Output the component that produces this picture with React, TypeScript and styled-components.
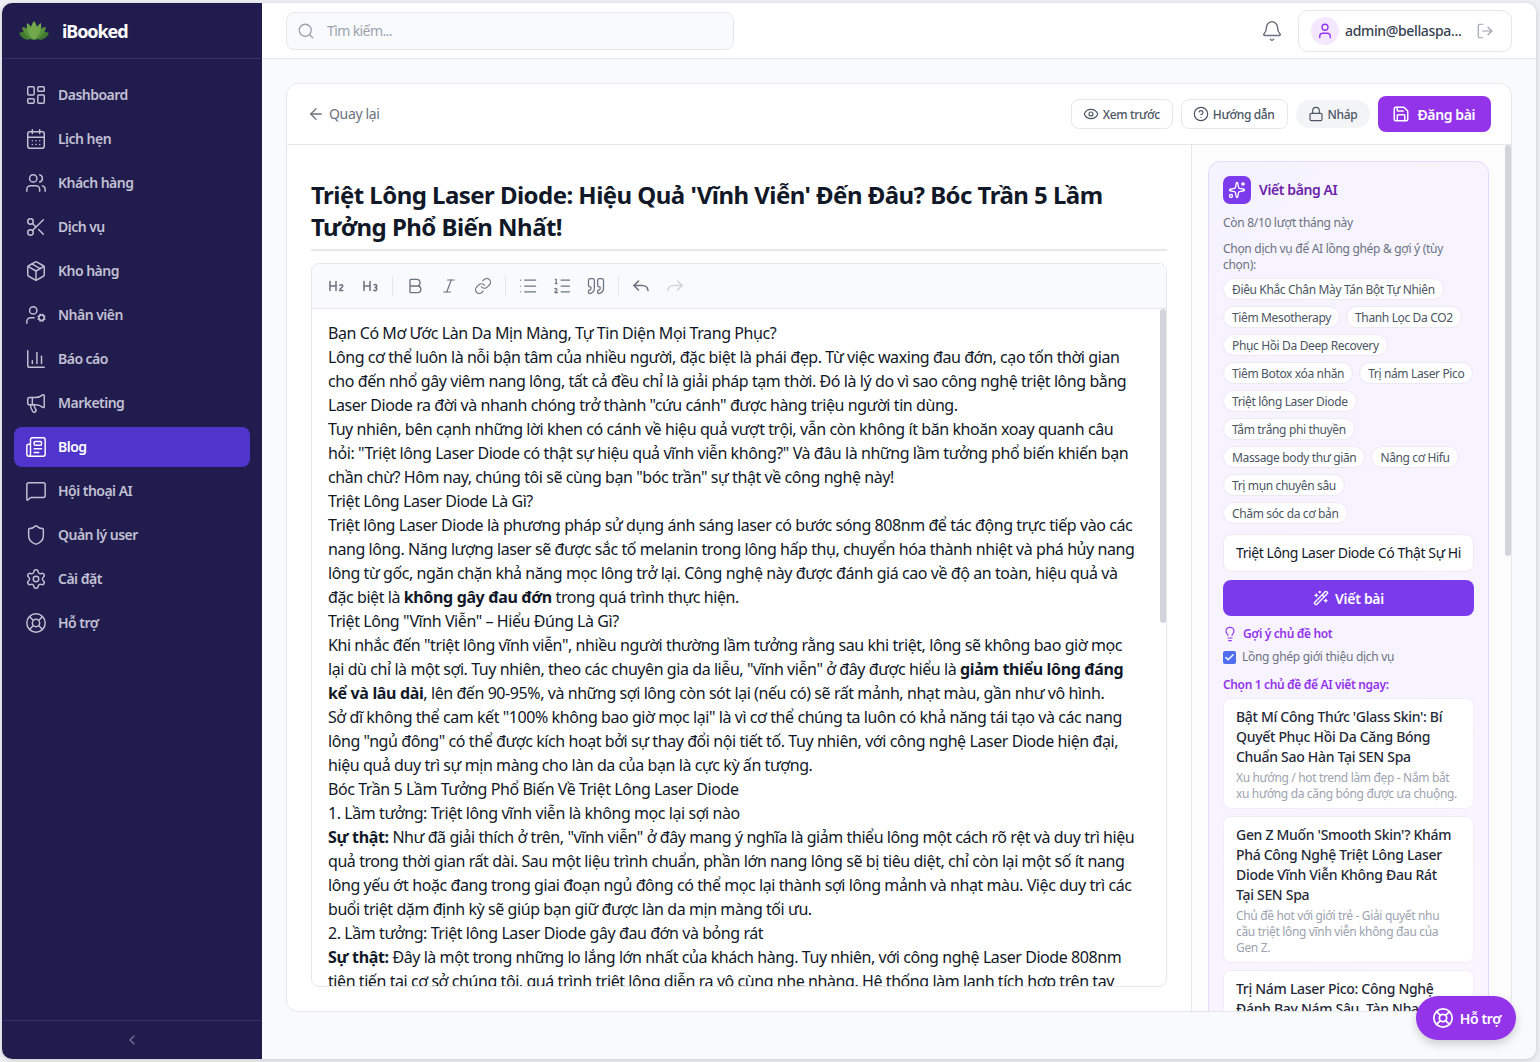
import React from "react";
import styled, { createGlobalStyle } from "styled-components";
import {
  LayoutDashboard, CalendarDays, Users, Scissors, Package, UserCog, BarChart3, Megaphone, Newspaper,
  MessageSquare, Shield, Settings, LifeBuoy, ChevronLeft, Search, Bell, User, LogOut, ArrowLeft, Eye,
  CircleHelp, Lock, Save, Heading2, Heading3, Bold, Italic, Link, List, ListOrdered, Quote,
  Sparkles, WandSparkles, Lightbulb, Check,
} from "lucide-react";

const FONT = `"Noto Sans", "Open Sans", sans-serif`;

const GlobalStyle = createGlobalStyle`
  html, body { margin: 0; padding: 0; height: 100%; background: #eeeef5; overflow: hidden; }
  * { box-sizing: border-box; }
  body { font-family: ${FONT}; color: #111827; }
`;

const Frame = styled.div`
  width: 1540px;
  height: 1062px;
  padding: 3px 4px 3px 2px;
`;

const Shell = styled.div`
  position: relative;
  display: flex;
  width: 100%;
  height: 100%;
  border-radius: 10px;
  overflow: hidden;
  background: #f9fafb;
  box-shadow: 0 1px 5px rgba(0, 0, 0, 0.16);
`;

const Sidebar = styled.aside`
  display: flex;
  flex-direction: column;
  flex: 0 0 260px;
  background: #211c4e;
`;

const Brand = styled.div`
  display: flex;
  align-items: center;
  gap: 13px;
  height: 56px;
  padding: 0 17px;
  border-bottom: 1px solid #37325f;
  color: #fff;
  font-size: 18px;
  font-weight: 700;
  letter-spacing: -1.1px;
`;

const Nav = styled.nav`
  display: flex;
  flex: 1;
  flex-direction: column;
  gap: 4px;
  padding: 16px 12px;
`;

const NavItem = styled.div<{ $active?: boolean }>`
  display: flex;
  align-items: center;
  gap: 11px;
  height: 40px;
  padding: 0 11px;
  border-radius: 8px;
  background: ${(p) => (p.$active ? "#4f35cb" : "transparent")};
  color: ${(p) => (p.$active ? "#fff" : "#c2c0d3")};
  font-size: 14px;
  font-weight: 600;
  letter-spacing: -0.52px;
  svg { flex: none; }
`;

const RaisedLabel = styled.span`
  margin-bottom: 2px;
`;

const Collapse = styled.div`
  display: flex;
  align-items: center;
  justify-content: center;
  height: 39px;
  border-top: 1px solid #37325f;
  color: #77739a;
`;

const Body = styled.div`
  display: flex;
  flex: 1;
  min-width: 0;
  flex-direction: column;
`;

const Header = styled.header`
  display: flex;
  align-items: center;
  flex: 0 0 56px;
  padding: 0 24px;
  background: #fff;
  border-bottom: 1px solid #e5e7eb;
`;

const SearchBox = styled.div`
  display: flex;
  align-items: center;
  gap: 12px;
  width: 448px;
  height: 38px;
  padding: 0 10px;
  border: 1px solid #e5e7eb;
  border-radius: 8px;
  background: #f9fafb;
  color: #9ca3af;
  font-size: 14px;
  letter-spacing: -0.6px;
`;

const HeaderRight = styled.div`
  display: flex;
  align-items: center;
  gap: 15px;
  margin-left: auto;
  color: #6b7280;
`;

const UserBox = styled.div`
  display: flex;
  align-items: center;
  gap: 6px;
  width: 214px;
  height: 42px;
  padding: 0 12px;
  border: 1px solid #e5e7eb;
  border-radius: 10px;
  color: #374151;
  font-size: 14px;
  font-weight: 500;
  letter-spacing: -0.35px;
`;

const Avatar = styled.span`
  display: flex;
  align-items: center;
  justify-content: center;
  width: 28px;
  height: 28px;
  border-radius: 50%;
  background: #f3e8ff;
  color: #9333ea;
`;

const UserName = styled.span`
  margin-right: 9px;
  white-space: nowrap;
`;

const Main = styled.main`
  flex: 1;
  min-height: 0;
  padding: 24px 24px 47px;
`;

const Card = styled.section`
  display: flex;
  flex-direction: column;
  height: 100%;
  overflow: hidden;
  border: 1px solid #e5e7eb;
  border-radius: 12px;
  background: #fff;
`;

const CardBar = styled.div`
  display: flex;
  align-items: center;
  flex: 0 0 61px;
  gap: 8px;
  padding: 0 20px;
  border-bottom: 1px solid #e5e7eb;
`;

const BackLink = styled.div`
  display: flex;
  align-items: center;
  gap: 4px;
  margin-right: auto;
  color: #6b7280;
  font-size: 14px;
  letter-spacing: -0.35px;
`;

const OutlineButton = styled.div`
  display: flex;
  align-items: center;
  gap: 4px;
  height: 30px;
  padding: 0 12px 0 11px;
  border: 1px solid #e5e7eb;
  border-radius: 8px;
  color: #4b5563;
  font-size: 12px;
  font-weight: 500;
  letter-spacing: -0.35px;
`;

const DraftPill = styled.div`
  display: flex;
  align-items: center;
  gap: 4px;
  height: 28px;
  padding: 0 12px;
  border-radius: 14px;
  background: #f3f4f6;
  color: #4b5563;
  font-size: 12px;
  font-weight: 500;
  letter-spacing: -0.3px;
`;

const PublishButton = styled.div`
  display: flex;
  align-items: center;
  gap: 8px;
  height: 36px;
  padding: 0 16px 0 14px;
  border-radius: 8px;
  background: #9333ea;
  color: #fff;
  font-size: 14px;
  font-weight: 600;
  letter-spacing: -0.4px;
`;

const Columns = styled.div`
  display: flex;
  flex: 1;
  min-height: 0;
`;

const EditorColumn = styled.div`
  display: flex;
  flex: 1;
  min-width: 0;
  flex-direction: column;
  padding: 34px 24px 24px;
  border-right: 1px solid #e5e7eb;
`;

const Title = styled.h1`
  margin: 0;
  padding-bottom: 6px;
  border-bottom: 2px solid #e5e7eb;
  color: #111827;
  font-size: 24px;
  font-weight: 700;
  line-height: 32px;
  letter-spacing: -0.54px;
`;

const EditorBox = styled.div`
  display: flex;
  flex: 1;
  min-height: 0;
  flex-direction: column;
  margin-top: 12px;
  overflow: hidden;
  border: 1px solid #e5e7eb;
  border-radius: 8px;
`;

const Toolbar = styled.div`
  display: flex;
  align-items: center;
  flex: 0 0 45px;
  gap: 6px;
  padding: 0 10px;
  background: #f9fafb;
  border-bottom: 1px solid #e5e7eb;
  color: #6b7280;
`;

const ToolButton = styled.span<{ $faded?: boolean }>`
  display: flex;
  align-items: center;
  justify-content: center;
  width: 28px;
  height: 28px;
  color: ${(p) => (p.$faded ? "#d1d5db" : "#6b7280")};
`;

const ToolDivider = styled.span`
  width: 1px;
  height: 20px;
  margin: 0 2px;
  background: #e5e7eb;
`;

const ScrollArea = styled.div`
  position: relative;
  flex: 1;
  min-height: 0;
  overflow: hidden;
  padding: 12px 16px;
`;

const Prose = styled.div`
  color: #111827;
  font-size: 16px;
  line-height: 24px;
  letter-spacing: -0.43px;
  white-space: nowrap;
  b { font-weight: 700; letter-spacing: -0.35px; }
`;

const ScrollThumb = styled.div<{ $top: number; $height: number }>`
  position: absolute;
  top: ${(p) => p.$top}px;
  right: 0;
  width: 6px;
  height: ${(p) => p.$height}px;
  border-radius: 3px;
  background: #d1d5db;
`;

const SidePanel = styled.div`
  position: relative;
  flex: 0 0 319px;
  overflow: hidden;
  padding: 16px 22px 0 16px;
  background: #fcfcfd;
`;

const AiCard = styled.div`
  padding: 14px;
  border: 1px solid #e2dbfd;
  border-radius: 12px;
  background: linear-gradient(135deg, #f5f3ff, #faf5ff);
`;

const AiHead = styled.div`
  display: flex;
  align-items: center;
  gap: 8px;
  color: #6b21a8;
  font-size: 14px;
  font-weight: 600;
  letter-spacing: -0.4px;
`;

const AiIcon = styled.span`
  display: flex;
  align-items: center;
  justify-content: center;
  width: 28px;
  height: 28px;
  border-radius: 7px;
  background: #7c3aed;
  color: #fff;
`;

const Muted = styled.p<{ $gap: number }>`
  margin: ${(p) => p.$gap}px 0 0;
  color: #6b7280;
  font-size: 12px;
  line-height: 16px;
  letter-spacing: -0.3px;
`;

const Chips = styled.div`
  display: flex;
  flex-direction: column;
  gap: 6px;
  margin-top: 5px;
`;

const ChipRow = styled.div`
  display: flex;
  gap: 6px;
`;

const Chip = styled.span`
  display: flex;
  align-items: center;
  height: 22px;
  padding: 0 8px;
  border: 1px solid #ece9f5;
  border-radius: 11px;
  background: #fff;
  color: #4b5563;
  font-size: 12px;
  letter-spacing: -0.36px;
  white-space: nowrap;
`;

const TopicInput = styled.div`
  height: 38px;
  margin-top: 10px;
  padding: 0 12px;
  border: 1px solid #ece9f5;
  border-radius: 8px;
  background: #fff;
  color: #111827;
  font-size: 14px;
  line-height: 36px;
  letter-spacing: -0.42px;
  white-space: nowrap;
`;

const WriteButton = styled.div`
  display: flex;
  align-items: center;
  justify-content: center;
  gap: 6px;
  height: 36px;
  margin-top: 8px;
  border-radius: 8px;
  background: #7c3aed;
  color: #fff;
  font-size: 14px;
  font-weight: 600;
  letter-spacing: -0.3px;
`;

const HotLink = styled.div`
  display: flex;
  align-items: center;
  gap: 5px;
  margin: 10px 0 0 -1px;
  color: #9333ea;
  font-size: 12px;
  font-weight: 600;
  line-height: 16px;
  letter-spacing: -0.35px;
`;

const CheckRow = styled.div`
  display: flex;
  align-items: center;
  gap: 6px;
  margin-top: 7px;
  color: #6b7280;
  font-size: 12px;
  line-height: 16px;
  letter-spacing: -0.28px;
`;

const CheckMark = styled.span`
  display: flex;
  align-items: center;
  justify-content: center;
  width: 13px;
  height: 13px;
  border-radius: 2px;
  background: #4f6ef0;
  color: #fff;
`;

const PickLabel = styled.div`
  margin-top: 12px;
  color: #9333ea;
  font-size: 12px;
  font-weight: 600;
  line-height: 16px;
  letter-spacing: -0.35px;
`;

const Topics = styled.div`
  display: flex;
  flex-direction: column;
  gap: 7px;
  margin-top: 5px;
`;

const Topic = styled.div`
  padding: 8px 12px 6px;
  border: 1px solid #f0edfb;
  border-radius: 8px;
  background: #fff;
`;

const TopicTitle = styled.div`
  color: #1f2937;
  font-size: 14px;
  font-weight: 500;
  line-height: 20px;
  letter-spacing: -0.3px;
  white-space: nowrap;
`;

const TopicNote = styled.div`
  margin-top: 3px;
  color: #9ca3af;
  font-size: 12px;
  line-height: 16px;
  letter-spacing: -0.34px;
  white-space: nowrap;
`;

const HelpFab = styled.div`
  position: absolute;
  right: 20px;
  bottom: 19px;
  display: flex;
  align-items: center;
  gap: 6px;
  height: 44px;
  padding: 0 15px 0 16px;
  border-radius: 22px;
  background: #9333ea;
  box-shadow: 0 4px 10px rgba(0, 0, 0, 0.18);
  color: #fff;
  font-size: 14px;
  font-weight: 600;
  letter-spacing: -0.4px;
`;

const LotusLogo = () => (
  <svg width="30" height="20" viewBox="0 0 30 20">
    <path d="M0 12c4-2 8-1 12 6-5 2-9 0-12-6z" fill="#3f7a30" />
    <path d="M30 12c-4-2-8-1-12 6 5 2 9 0 12-6z" fill="#3f7a30" />
    <path d="M3 6c5 0 9 4 11 13-6-2-10-7-11-13z" fill="#558f3a" />
    <path d="M27 6c-5 0-9 4-11 13 6-2 10-7 11-13z" fill="#558f3a" />
    <path d="M8 2c4 2 7 8 7 17-5-4-8-10-7-17z" fill="#6fa84a" />
    <path d="M22 2c-4 2-7 8-7 17 5-4 8-10 7-17z" fill="#6fa84a" />
    <path d="M15 0c4 5 5 12 0 19-5-7-4-14 0-19z" fill="#74a84c" />
  </svg>
);

const UndoIcon = ({ flip }: { flip?: boolean }) => (
  <svg width="20" height="20" viewBox="0 0 20 20" fill="none" stroke="currentColor" strokeWidth="1.6" strokeLinecap="round" strokeLinejoin="round" transform={flip ? "scale(-1 1)" : undefined}>
    <path d="M7.5 5 3 9.5 7.5 14" />
    <path d="M3 9.5h8.5a5.5 5.5 0 0 1 5.5 5" />
  </svg>
);

const NAV = [
  { label: "Dashboard", icon: LayoutDashboard },
  { label: "Lịch hẹn", icon: CalendarDays },
  { label: "Khách hàng", icon: Users },
  { label: "Dịch vụ", icon: Scissors },
  { label: "Kho hàng", icon: Package },
  { label: "Nhân viên", icon: UserCog },
  { label: "Báo cáo", icon: BarChart3 },
  { label: "Marketing", icon: Megaphone },
  { label: "Blog", icon: Newspaper, active: true },
  { label: "Hội thoại AI", icon: MessageSquare },
  { label: "Quản lý user", icon: Shield },
  { label: "Cài đặt", icon: Settings },
  { label: "Hỗ trợ", icon: LifeBuoy },
];

const CHIP_ROWS = [
  ["Điêu Khắc Chân Mày Tán Bột Tự Nhiên"],
  ["Tiêm Mesotherapy", "Thanh Lọc Da CO2"],
  ["Phục Hồi Da Deep Recovery"],
  ["Tiêm Botox xóa nhăn", "Trị nám Laser Pico"],
  ["Triệt lông Laser Diode"],
  ["Tắm trắng phi thuyền"],
  ["Massage body thư giãn", "Nâng cơ Hifu"],
  ["Trị mụn chuyên sâu"],
  ["Chăm sóc da cơ bản"],
];

const App = () => (
  <Frame>
    <GlobalStyle />
    <Shell>
      <Sidebar>
        <Brand>
          <LotusLogo />
          iBooked
        </Brand>
        <Nav>
          {NAV.map(({ label, icon: Icon, active }) => (
            <NavItem key={label} $active={active}>
              <Icon size={22} strokeWidth={1.6} />
              <RaisedLabel>{label}</RaisedLabel>
            </NavItem>
          ))}
        </Nav>
        <Collapse>
          <ChevronLeft size={16} />
        </Collapse>
      </Sidebar>
      <Body>
        <Header>
          <SearchBox>
            <Search size={18} strokeWidth={1.75} />
            Tìm kiếm...
          </SearchBox>
          <HeaderRight>
            <Bell size={22} strokeWidth={1.6} />
            <UserBox>
              <Avatar>
                <User size={18} strokeWidth={1.75} />
              </Avatar>
              <UserName>admin@bellaspa...</UserName>
              <LogOut size={18} strokeWidth={1.6} color="#9ca3af" />
            </UserBox>
          </HeaderRight>
        </Header>
        <Main>
          <Card>
            <CardBar>
              <BackLink>
                <ArrowLeft size={18} strokeWidth={1.75} />
                <RaisedLabel>Quay lại</RaisedLabel>
              </BackLink>
              <OutlineButton>
                <Eye size={16} strokeWidth={1.75} />
                Xem trước
              </OutlineButton>
              <OutlineButton>
                <CircleHelp size={16} strokeWidth={1.75} />
                Hướng dẫn
              </OutlineButton>
              <DraftPill>
                <Lock size={16} strokeWidth={1.75} />
                Nháp
              </DraftPill>
              <PublishButton>
                <Save size={18} />
                Đăng bài
              </PublishButton>
            </CardBar>
            <Columns>
              <EditorColumn>
                <Title>
                  Triệt Lông Laser Diode: Hiệu Quả 'Vĩnh Viễn' Đến Đâu? Bóc Trần 5 Lầm
                  <br />
                  Tưởng Phổ Biến Nhất!
                </Title>
                <EditorBox>
                  <Toolbar>
                    <ToolButton><Heading2 size={18} /></ToolButton>
                    <ToolButton><Heading3 size={18} /></ToolButton>
                    <ToolDivider />
                    <ToolButton><Bold size={20} strokeWidth={1.6} /></ToolButton>
                    <ToolButton><Italic size={18} strokeWidth={1.6} /></ToolButton>
                    <ToolButton><Link size={18} strokeWidth={1.6} /></ToolButton>
                    <ToolDivider />
                    <ToolButton><List size={20} strokeWidth={1.5} /></ToolButton>
                    <ToolButton><ListOrdered size={20} strokeWidth={1.5} /></ToolButton>
                    <ToolButton><Quote size={20} strokeWidth={1.5} /></ToolButton>
                    <ToolDivider />
                    <ToolButton><UndoIcon /></ToolButton>
                    <ToolButton $faded><UndoIcon flip /></ToolButton>
                  </Toolbar>
                  <ScrollArea>
                    <Prose>
                      Bạn Có Mơ Ước Làn Da Mịn Màng, Tự Tin Diện Mọi Trang Phục?<br />
                      Lông cơ thể luôn là nỗi bận tâm của nhiều người, đặc biệt là phái đẹp. Từ việc waxing đau đớn, cạo tốn thời gian<br />
                      cho đến nhổ gây viêm nang lông, tất cả đều chỉ là giải pháp tạm thời. Đó là lý do vì sao công nghệ triệt lông bằng<br />
                      Laser Diode ra đời và nhanh chóng trở thành "cứu cánh" được hàng triệu người tin dùng.<br />
                      Tuy nhiên, bên cạnh những lời khen có cánh về hiệu quả vượt trội, vẫn còn không ít băn khoăn xoay quanh câu<br />
                      hỏi: "Triệt lông Laser Diode có thật sự hiệu quả vĩnh viễn không?" Và đâu là những lầm tưởng phổ biến khiến bạn<br />
                      chần chừ? Hôm nay, chúng tôi sẽ cùng bạn "bóc trần" sự thật về công nghệ này!<br />
                      Triệt Lông Laser Diode Là Gì?<br />
                      Triệt lông Laser Diode là phương pháp sử dụng ánh sáng laser có bước sóng 808nm để tác động trực tiếp vào các<br />
                      nang lông. Năng lượng laser sẽ được sắc tố melanin trong lông hấp thụ, chuyển hóa thành nhiệt và phá hủy nang<br />
                      lông từ gốc, ngăn chặn khả năng mọc lông trở lại. Công nghệ này được đánh giá cao về độ an toàn, hiệu quả và<br />
                      đặc biệt là <b>không gây đau đớn</b> trong quá trình thực hiện.<br />
                      Triệt Lông "Vĩnh Viễn" – Hiểu Đúng Là Gì?<br />
                      Khi nhắc đến "triệt lông vĩnh viễn", nhiều người thường lầm tưởng rằng sau khi triệt, lông sẽ không bao giờ mọc<br />
                      lại dù chỉ là một sợi. Tuy nhiên, theo các chuyên gia da liễu, "vĩnh viễn" ở đây được hiểu là <b>giảm thiểu lông đáng</b><br />
                      <b>kể và lâu dài</b>, lên đến 90-95%, và những sợi lông còn sót lại (nếu có) sẽ rất mảnh, nhạt màu, gần như vô hình.<br />
                      Sở dĩ không thể cam kết "100% không bao giờ mọc lại" là vì cơ thể chúng ta luôn có khả năng tái tạo và các nang<br />
                      lông "ngủ đông" có thể được kích hoạt bởi sự thay đổi nội tiết tố. Tuy nhiên, với công nghệ Laser Diode hiện đại,<br />
                      hiệu quả duy trì sự mịn màng cho làn da của bạn là cực kỳ ấn tượng.<br />
                      Bóc Trần 5 Lầm Tưởng Phổ Biến Về Triệt Lông Laser Diode<br />
                      1. Lầm tưởng: Triệt lông vĩnh viễn là không mọc lại sợi nào<br />
                      <b>Sự thật:</b> Như đã giải thích ở trên, "vĩnh viễn" ở đây mang ý nghĩa là giảm thiểu lông một cách rõ rệt và duy trì hiệu<br />
                      quả trong thời gian rất dài. Sau một liệu trình chuẩn, phần lớn nang lông sẽ bị tiêu diệt, chỉ còn lại một số ít nang<br />
                      lông yếu ớt hoặc đang trong giai đoạn ngủ đông có thể mọc lại thành sợi lông mảnh và nhạt màu. Việc duy trì các<br />
                      buổi triệt dặm định kỳ sẽ giúp bạn giữ được làn da mịn màng tối ưu.<br />
                      2. Lầm tưởng: Triệt lông Laser Diode gây đau đớn và bỏng rát<br />
                      <b>Sự thật:</b> Đây là một trong những lo lắng lớn nhất của khách hàng. Tuy nhiên, với công nghệ Laser Diode 808nm<br />
                      tiên tiến tại cơ sở chúng tôi, quá trình triệt lông diễn ra vô cùng nhẹ nhàng. Hệ thống làm lạnh tích hợp trên tay
                    </Prose>
                    <ScrollThumb $top={0} $height={314} />
                  </ScrollArea>
                </EditorBox>
              </EditorColumn>
              <SidePanel>
                <AiCard>
                  <AiHead>
                    <AiIcon><Sparkles size={18} strokeWidth={1.75} /></AiIcon>
                    <RaisedLabel>Viết bằng AI</RaisedLabel>
                  </AiHead>
                  <Muted $gap={11}>Còn 8/10 lượt tháng này</Muted>
                  <Muted $gap={10}>Chọn dịch vụ để AI lồng ghép &amp; gợi ý (tùy chọn):</Muted>
                  <Chips>
                    {CHIP_ROWS.map((row) => (
                      <ChipRow key={row[0]}>
                        {row.map((chip) => (
                          <Chip key={chip}>{chip}</Chip>
                        ))}
                      </ChipRow>
                    ))}
                  </Chips>
                  <TopicInput>Triệt Lông Laser Diode Có Thật Sự Hi</TopicInput>
                  <WriteButton>
                    <WandSparkles size={16} />
                    Viết bài
                  </WriteButton>
                  <HotLink>
                    <Lightbulb size={16} strokeWidth={1.75} />
                    Gợi ý chủ đề hot
                  </HotLink>
                  <CheckRow>
                    <CheckMark><Check size={11} strokeWidth={3} /></CheckMark>
                    Lồng ghép giới thiệu dịch vụ
                  </CheckRow>
                  <PickLabel>Chọn 1 chủ đề để AI viết ngay:</PickLabel>
                  <Topics>
                    <Topic>
                      <TopicTitle>Bật Mí Công Thức 'Glass Skin': Bí<br />Quyết Phục Hồi Da Căng Bóng<br />Chuẩn Sao Hàn Tại SEN Spa</TopicTitle>
                      <TopicNote>Xu hướng / hot trend làm đẹp - Nắm bắt<br />xu hướng da căng bóng được ưa chuộng.</TopicNote>
                    </Topic>
                    <Topic>
                      <TopicTitle>Gen Z Muốn 'Smooth Skin'? Khám<br />Phá Công Nghệ Triệt Lông Laser<br />Diode Vĩnh Viễn Không Đau Rát<br />Tại SEN Spa</TopicTitle>
                      <TopicNote>Chủ đề hot với giới trẻ - Giải quyết nhu<br />cầu triệt lông vĩnh viễn không đau của<br />Gen Z.</TopicNote>
                    </Topic>
                    <Topic>
                      <TopicTitle>Trị Nám Laser Pico: Công Nghệ<br />Đánh Bay Nám Sâu, Tàn Nhang<br />Tại SEN Spa</TopicTitle>
                    </Topic>
                  </Topics>
                </AiCard>
                <ScrollThumb $top={0} $height={411} />
              </SidePanel>
            </Columns>
          </Card>
        </Main>
      </Body>
      <HelpFab>
        <LifeBuoy size={22} strokeWidth={1.9} />
        Hỗ trợ
      </HelpFab>
    </Shell>
  </Frame>
);

export default App;
